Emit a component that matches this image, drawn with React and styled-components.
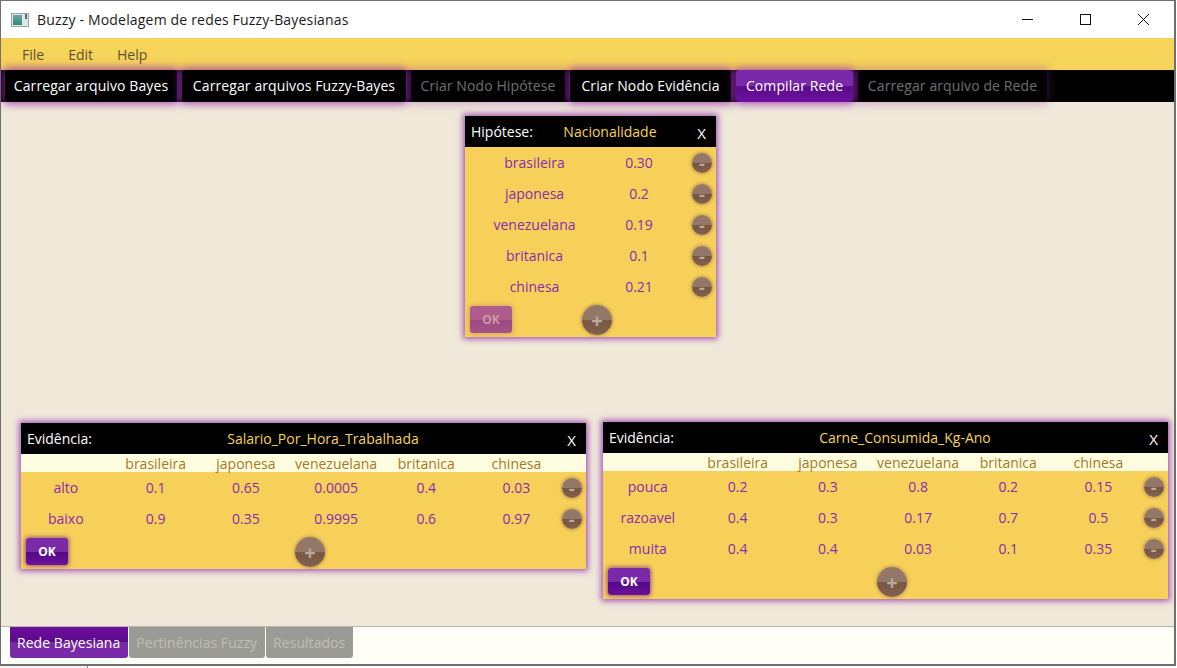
import React from 'react'
import styled, { createGlobalStyle } from 'styled-components'

const GlobalStyle = createGlobalStyle`
  html, body {
    margin: 0;
    padding: 0;
    background: #ffffff;
  }
  body {
    font-family: "Open Sans", "Noto Sans", sans-serif;
    overflow: hidden;
  }
`

const toolbarButtons = [
  { label: 'Carregar arquivo Bayes', width: 172 },
  { label: 'Carregar arquivos Fuzzy-Bayes', width: 224 },
  { label: 'Criar Nodo Hipótese', width: 154, disabled: true },
  { label: 'Criar Nodo Evidência', width: 161 },
  { label: 'Compilar Rede', width: 117, active: true },
  { label: 'Carregar arquivo de Rede', width: 189, disabled: true },
]

const hypothesisRows = [
  ['brasileira', '0.30'],
  ['japonesa', '0.2'],
  ['venezuelana', '0.19'],
  ['britanica', '0.1'],
  ['chinesa', '0.21'],
]

const columns = ['brasileira', 'japonesa', 'venezuelana', 'britanica', 'chinesa']

const salarioRows = [
  ['alto', '0.1', '0.65', '0.0005', '0.4', '0.03'],
  ['baixo', '0.9', '0.35', '0.9995', '0.6', '0.97'],
]

const carneRows = [
  ['pouca', '0.2', '0.3', '0.8', '0.2', '0.15'],
  ['razoavel', '0.4', '0.3', '0.17', '0.7', '0.5'],
  ['muita', '0.4', '0.4', '0.03', '0.1', '0.35'],
]

const EvidenceNode = ({ title, rows, x, y }) => (
  <Node $x={x} $y={y} $width={565}>
    <NodeHeader>
      <NodeKind>Evidência:</NodeKind>
      <NodeTitle $inset={3}>{title}</NodeTitle>
      <CloseNode>X</CloseNode>
    </NodeHeader>
    <ColumnsRow>
      <span />
      {columns.map((c) => <ColumnName key={c}>{c}</ColumnName>)}
    </ColumnsRow>
    {rows.map((row) => (
      <TableRow key={row[0]}>
        {row.map((v, i) => <Cell key={i}>{v}</Cell>)}
        <MinusCell $right={5}><RoundButton $size={20}>-</RoundButton></MinusCell>
      </TableRow>
    ))}
    <NodeFooter>
      <OkButton>OK</OkButton>
      <PlusSlot $left={274}><RoundButton $size={30} $plus>+</RoundButton></PlusSlot>
    </NodeFooter>
  </Node>
)

const App = () => {
  return (
    <>
      <GlobalStyle />
      <Window>
        <TitleBar>
          <AppIcon viewBox="0 0 18 14">
            <defs>
              <linearGradient id="iconFill" x1="0" y1="0" x2="0" y2="1">
                <stop offset="0" stopColor="#6fa6a8" />
                <stop offset="1" stopColor="#2f8a6a" />
              </linearGradient>
            </defs>
            <rect x="0.5" y="0.5" width="17" height="13" fill="#dfe6ea" stroke="#9aa3a8" />
            <rect x="2" y="2" width="9" height="10" fill="url(#iconFill)" />
            <rect x="14" y="1" width="2" height="5" fill="#4d6f78" />
          </AppIcon>
          <WindowTitle>Buzzy - Modelagem de redes Fuzzy-Bayesianas</WindowTitle>
          <WindowControls>
            <WindowControl viewBox="0 0 58 37">
              <path d="M24 18.5h11" stroke="#111" fill="none" />
            </WindowControl>
            <WindowControl viewBox="0 0 58 37">
              <rect x="24.5" y="13.5" width="10" height="10" stroke="#111" fill="none" />
            </WindowControl>
            <WindowControl viewBox="0 0 58 37">
              <path d="M24 13l11 11M35 13l-11 11" stroke="#111" fill="none" />
            </WindowControl>
          </WindowControls>
        </TitleBar>
        <MenuBar>
          <MenuItem>File</MenuItem>
          <MenuItem>Edit</MenuItem>
          <MenuItem>Help</MenuItem>
        </MenuBar>
        <Toolbar>
          {toolbarButtons.map((b) => (
            <ToolButton key={b.label} $width={b.width} $active={b.active} $disabled={b.disabled}>
              {b.label}
            </ToolButton>
          ))}
        </Toolbar>
        <Canvas>
          <Node $x={464} $y={14} $width={251}>
            <NodeHeader>
              <NodeKind>Hipótese:</NodeKind>
              <NodeTitle>Nacionalidade</NodeTitle>
              <CloseNode>X</CloseNode>
            </NodeHeader>
            {hypothesisRows.map(([name, value]) => (
              <HypothesisRow key={name}>
                <Cell>{name}</Cell>
                <Cell>{value}</Cell>
                <MinusCell $right={4}><RoundButton $size={20}>-</RoundButton></MinusCell>
              </HypothesisRow>
            ))}
            <NodeFooter>
              <OkButton $disabled>OK</OkButton>
              <PlusSlot $left={117}><RoundButton $size={30} $plus>+</RoundButton></PlusSlot>
            </NodeFooter>
          </Node>
          <EvidenceNode title="Salario_Por_Hora_Trabalhada" rows={salarioRows} x={20} y={321} />
          <EvidenceNode title="Carne_Consumida_Kg-Ano" rows={carneRows} x={602} y={320} />
        </Canvas>
        <TabBar>
          <Tab $selected>Rede Bayesiana</Tab>
          <Tab>Pertinências Fuzzy</Tab>
          <Tab>Resultados</Tab>
        </TabBar>
      </Window>
      <BehindWindow />
    </>
  )
}

export default App

const Window = styled.div`
  width: 1176px;
  height: 666px;
  box-sizing: border-box;
  border: 1px solid #6f6f6f;
  border-right-width: 2px;
  border-bottom-width: 2px;
  display: flex;
  flex-direction: column;
  background: #ffffff;
`

const BehindWindow = styled.div`
  width: 87px;
  height: 2px;
  background: #f2f2f2;
  border-right: 1px solid #8a8a8a;
`

const TitleBar = styled.div`
  height: 37px;
  flex: none;
  display: flex;
  align-items: center;
  padding-left: 10px;
  background: #ffffff;
`

const AppIcon = styled.svg`
  width: 18px;
  height: 14px;
  margin-right: 8px;
`

const WindowTitle = styled.div`
  font-size: 14px;
  letter-spacing: 0.18px;
  color: #1a1a1a;
  flex: 1;
`

const WindowControls = styled.div`
  display: flex;
  margin-right: 2px;
`

const WindowControl = styled.svg`
  width: 58px;
  height: 37px;
`

const MenuBar = styled.div`
  height: 32px;
  flex: none;
  display: flex;
  align-items: center;
  padding-left: 10px;
  gap: 24px;
  background: #f6d359;
`

const MenuItem = styled.div`
  font-size: 14px;
  color: #5a5238;
  padding-left: 11px;
  margin-right: -11px;
`

const Toolbar = styled.div`
  height: 32px;
  flex: none;
  display: flex;
  gap: 5px;
  padding-left: 4px;
  background: #000000;
  position: relative;
  z-index: 2;
`

const ToolButton = styled.div`
  width: ${(p) => p.$width}px;
  flex: none;
  display: flex;
  align-items: center;
  justify-content: center;
  padding-bottom: 2px;
  box-sizing: border-box;
  border-radius: 3px;
  font-size: 14px;
  letter-spacing: 0.1px;
  color: #ffffff;
  background: ${(p) => (p.$active ? 'linear-gradient(#7a2aa8 0, #7a2aa8 50%, #5a0a8a 52%, #6e109e 100%)' : '#000000')};
  box-shadow: 0 0 9px 2px rgba(150, 40, 175, 0.8);
  opacity: ${(p) => (p.$disabled ? 0.42 : 1)};
`

const Canvas = styled.div`
  flex: 1;
  position: relative;
  background: #f0e9da;
  overflow: hidden;
`

const Node = styled.div`
  position: absolute;
  left: ${(p) => p.$x}px;
  top: ${(p) => p.$y}px;
  width: ${(p) => p.$width}px;
  background: #f6d059;
  box-shadow: 0 0 6px 2px rgba(140, 35, 170, 0.75);
`

const NodeHeader = styled.div`
  height: 31px;
  display: flex;
  align-items: center;
  padding-left: 6px;
  background: #000000;
  color: #ffffff;
  font-size: 14px;
`

const NodeKind = styled.div`
  color: #ffffff;
`

const NodeTitle = styled.div`
  flex: 1;
  text-align: center;
  color: #f6d359;
  padding-right: ${(p) => p.$inset || 0}px;
`

const CloseNode = styled.div`
  width: 29px;
  text-align: center;
  font-size: 15px;
  padding-top: 3px;
`

const HypothesisRow = styled.div`
  height: 31px;
  display: grid;
  grid-template-columns: 139px 70px 1fr;
  align-items: center;
`

const ColumnsRow = styled.div`
  height: 18px;
  display: grid;
  grid-template-columns: 89.6px repeat(5, 90.2px) 1fr;
  align-items: center;
  background: #fffde0;
`

const ColumnName = styled.div`
  text-align: center;
  font-size: 14px;
  color: #a6791e;
`

const TableRow = styled.div`
  height: 31px;
  display: grid;
  grid-template-columns: 89.6px repeat(5, 90.2px) 1fr;
  align-items: center;
`

const Cell = styled.div`
  text-align: center;
  font-size: 14px;
  color: #8a2bb0;
`

const MinusCell = styled.div`
  display: flex;
  justify-content: flex-end;
  padding-right: ${(p) => p.$right}px;
`

const RoundButton = styled.div`
  width: ${(p) => p.$size}px;
  height: ${(p) => p.$size}px;
  border-radius: 50%;
  display: flex;
  align-items: center;
  justify-content: center;
  font-size: ${(p) => (p.$plus ? 20 : 18)}px;
  font-weight: 700;
  color: #bba89f;
  background: linear-gradient(#937868 0, #937868 50%, #775644 52%, #82634f 100%);
  box-shadow: 0 0 3px 1px rgba(120, 70, 70, 0.4);
`

const NodeFooter = styled.div`
  height: 35px;
  position: relative;
  display: flex;
  align-items: center;
  padding-left: 5px;
`

const OkButton = styled.div`
  width: 42px;
  height: 27px;
  border-radius: 3px;
  display: flex;
  align-items: center;
  justify-content: center;
  font-size: 12px;
  font-weight: 700;
  color: ${(p) => (p.$disabled ? '#c99aa8' : '#ffffff')};
  background: ${(p) => (p.$disabled
    ? 'linear-gradient(#ad5c8c 0, #ad5c8c 50%, #9c4a82 52%, #a5548a 100%)'
    : 'linear-gradient(#7a2aa8 0, #7a2aa8 50%, #530a85 52%, #6c109c 100%)')};
  box-shadow: 0 0 4px 1px ${(p) => (p.$disabled ? 'rgba(170, 90, 130, 0.4)' : 'rgba(125, 40, 125, 0.75)')};
`

const PlusSlot = styled.div`
  position: absolute;
  left: ${(p) => p.$left}px;
  top: 3px;
`

const TabBar = styled.div`
  height: 37px;
  flex: none;
  display: flex;
  gap: 1px;
  padding-left: 9px;
  background: #fffef6;
  border-top: 1px solid #b8b7ae;
`

const Tab = styled.div`
  display: flex;
  align-items: center;
  padding: 0 8px 0 7px;
  height: 31px;
  border-radius: 0 0 3px 3px;
  font-size: 14px;
  letter-spacing: 0.05px;
  color: ${(p) => (p.$selected ? '#ffffff' : '#bdbdb8')};
  background: ${(p) => (p.$selected ? 'linear-gradient(#6e0e9e 0, #5a0a8a 48%, #7a2aa8 50%, #7a2aa8 100%)' : '#9b9b96')};
`
